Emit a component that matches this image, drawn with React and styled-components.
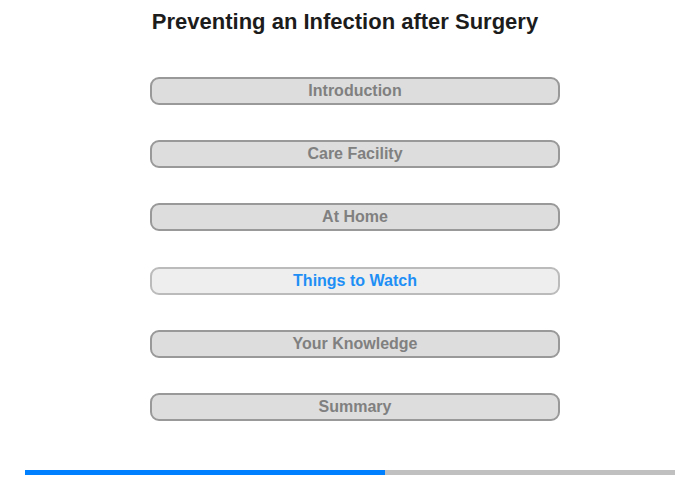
import React from "react";
import styled, { createGlobalStyle } from "styled-components";

const Global = createGlobalStyle`
  html, body { margin: 0; padding: 0; background: #fff; }
  body { font-family: "Liberation Sans", Arial, sans-serif; }
`;

const Page = styled.div`
  width: 700px;
  height: 480px;
  display: flex;
  flex-direction: column;
  align-items: center;
`;

const Title = styled.h1`
  margin: 9px 0 0 -10px;
  font-size: 22px;
  line-height: 25px;
  font-weight: bold;
  color: #1c1c1c;
`;

const Menu = styled.nav`
  margin-top: 43px;
  margin-left: 10px;
  display: flex;
  flex-direction: column;
  gap: 35.2px;
`;

const Item = styled.div`
  box-sizing: border-box;
  width: 410px;
  height: 28px;
  border: 2px solid ${(p) => (p.$active ? "#bbbbbb" : "#999999")};
  border-radius: 9px;
  background: ${(p) => (p.$active ? "#eeeeee" : "#dddddd")};
  color: ${(p) => (p.$active ? "#1e8ff5" : "#808080")};
  font-size: 16px;
  font-weight: bold;
  display: flex;
  align-items: center;
  justify-content: center;
`;

const Progress = styled.div`
  margin-top: auto;
  margin-bottom: 5px;
  width: 650px;
  height: 5px;
  background: #c0c0c0;
  display: flex;
`;

const Fill = styled.div`
  height: 100%;
  background: #0080ff;
`;

const items = ["Introduction", "Care Facility", "At Home", "Things to Watch", "Your Knowledge", "Summary"];

export default function App() {
  return (
    <>
      <Global />
      <Page>
        <Title>Preventing an Infection after Surgery</Title>
        <Menu>
          {items.map((t) => (
            <Item key={t} $active={t === "Things to Watch"}>{t}</Item>
          ))}
        </Menu>
        <Progress>
          <Fill style={{ width: `${(360 / 650) * 100}%` }} />
        </Progress>
      </Page>
    </>
  );
}
